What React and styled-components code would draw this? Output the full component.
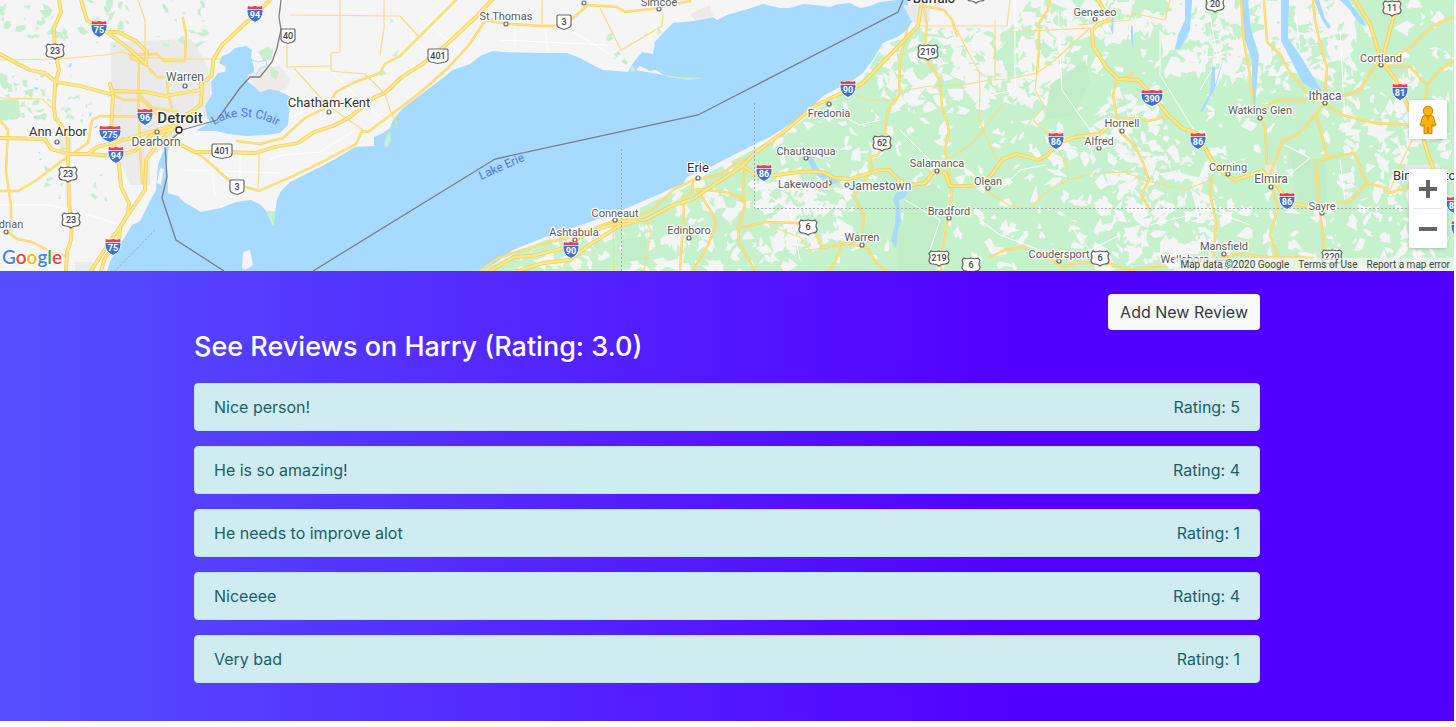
import React from "react";
import styled, { createGlobalStyle } from "styled-components";

const GlobalStyle = createGlobalStyle`
  *, *::before, *::after { box-sizing: border-box; }
  body { margin: 0; background: #fff; font-family: Inter, "Liberation Sans", sans-serif; font-size: 16px; line-height: 24px; }
`;

const Page = styled.div`
  padding: 0 2px 6px 0;
`;

const MapFrame = styled.section`
  position: relative;
  height: 271px;
  overflow: hidden;
  background: #f5f5f5;
  font-family: Roboto, sans-serif;
`;

const MapCanvas = styled.svg`
  display: block;
  width: 100%;
  height: 100%;
`;

const MapControls = styled.div`
  position: absolute;
  right: 7px;
  bottom: 23px;
  display: flex;
  flex-direction: column;
  gap: 30px;
`;

const ControlGroup = styled.div`
  width: 38px;
  border-radius: 2px;
  background: #fff;
  box-shadow: 0 1px 4px -1px rgba(0, 0, 0, 0.3);
`;

const ControlButton = styled.button`
  display: grid;
  place-items: center;
  width: 38px;
  height: 39px;
  padding: 0;
  border: 0;
  background: none;
  cursor: pointer;
`;

const ControlDivider = styled.hr`
  height: 1px;
  margin: 0 5px;
  border: 0;
  background: #e6e6e6;
`;

const Attribution = styled.footer`
  position: absolute;
  right: 0;
  bottom: 0;
  display: flex;
  gap: 9px;
  padding: 0 4px 0 6px;
  background: rgba(245, 245, 245, 0.7);
  color: #444;
  font-size: 10px;
  line-height: 13px;
`;

const AttributionLink = styled.a`
  color: inherit;
  text-decoration: none;
`;

const Reviews = styled.main`
  padding: 23px 16px 38px;
  background: linear-gradient(to right, #5550ff 0%, #5200ff 70%);
`;

const Container = styled.div`
  display: flex;
  flex-direction: column;
  max-width: 1066px;
  margin: 0 auto;
`;

const AddButton = styled.button`
  align-self: flex-end;
  height: 36px;
  padding: 0 12px;
  border: 0;
  border-radius: 4px;
  background: #f8f9fa;
  color: #343a40;
  font: inherit;
  cursor: pointer;
`;

const Title = styled.h1`
  margin: 0 0 19px;
  color: #fff;
  font-size: 27px;
  font-weight: 500;
  line-height: 34px;
`;

const ReviewList = styled.ul`
  display: flex;
  flex-direction: column;
  gap: 15px;
  margin: 0;
  padding: 0;
  list-style: none;
`;

const ReviewItem = styled.li`
  display: flex;
  justify-content: space-between;
  padding: 11px 19px;
  border: 1px solid #bee5eb;
  border-radius: 4px;
  background: #cfedf1;
  color: #1b6068;
`;

/* ---------- map data ---------- */

const WATER = [
  "107,271 110,262 117,248 125,237 132,225 140,221 150,201 156,190 158,165 163,152 170,140 175,133 173,141 168,150 167,165 168,193 178,196 184,202 201,212 221,208 236,202 251,200 261,205 267,212 273,226 275,212 277,200 281,191 290,182 320,167 337,158 355,147 374,146 374,137 383,133 390,128 393,120 403,108 423,93 440,80 453,70 470,64 480,56 493,51 503,52 540,53 567,53 580,58 591,64 603,70 628,72 633,63 642,52 653,54 655,42 663,33 673,23 694,21 713,17 717,20 727,15 748,9 763,4 780,8 790,8 803,4 815,5 830,7 838,4 850,3 860,8 870,6 880,2 897,0 907,0 913,20 907,30 897,37 883,43 874,58 863,73 850,82 840,87 823,96 817,102 805,113 793,122 770,137 753,145 720,162 705,170 692,175 687,177 683,184 670,189 660,194 627,208 590,222 543,238 513,250 495,263 480,271",
  "210,122 207,118 205,106 212,94 211,82 218,73 225,72 226,67 219,63 222,56 228,54 235,48 246,46 252,50 251,57 254,64 254,72 248,75 247,81 254,86 260,92 270,89 279,91 289,96 289,112 288,125 280,133 267,135 246,136 228,134 216,131 196,131",
  "1241,0 1248,0 1251,30 1259,55 1255,106 1252,106 1252,60 1242,32",
  "1281,0 1289,0 1288,38 1300,55 1312,75 1322,91 1322,95 1302,82 1292,62 1281,41",
  "1314,0 1319,0 1325,18 1331,27 1328,29 1322,20",
  "1340,0 1348,0 1363,20 1366,27 1358,22 1350,10",
  "1192,0 1190,30 1180,49 1175,49 1178,35 1185,20 1185,0",
  "1225,53 1216,86 1203,111 1200,112 1210,93 1212,67 1215,67 1215,85",
  "1112,16 1114,16 1113,35 1111,30",
  "1131,25 1133,27 1133,47 1131,40",
  "804,153 811,155 818,168 824,173 833,178 840,182 832,184 824,181 814,173",
  "896,193 909,190 905,197 899,200 901,222 898,230 896,248 894,245 891,240 895,226 896,208 893,200",
];

const ISLANDS = [
  "243,252 250,250 253,265 245,270 242,268",
  "636,70 640,66 650,71 656,70 664,75 652,73",
  "160,168 164,169 161,185 157,183",
];

const COAST_GREEN = [
  "267,211 275,211 274,227",
  "390,131 391,140 388,147 384,146 386,137",
  "660,74 678,77 703,78 690,80 668,77",
  "632,65 636,71 630,72",
];

const US_LAND =
  "480,271 513,255 543,241 590,228 627,215 660,198 683,189 710,172 753,150 793,128 817,109 840,93 863,79 874,60 883,45 907,37 918,20 925,28 1010,28 1030,0 1454,0 1454,271";

const MAJOR = [
  "59,0 61,12 54,28 55,52 59,70 55,84 54,105 55,117 68,135 68,155 69,205 72,222 71,240 67,252 66,271",
  "0,54 18,64 30,70 45,73 56,82 80,86 110,94 115,91 145,92 165,96 201,90 201,81",
  "81,0 87,20 98,29 108,33 128,48 146,64 147,52 136,41 118,32 107,32",
  "270,0 250,19 222,45 213,60 212,76 202,83 201,104 193,111 180,118",
  "110,84 113,95 111,132 115,150 119,165 121,187 129,203 128,213 120,228 119,240 105,258 101,271",
  "174,127 156,146 146,160 145,190 128,215 107,246 91,271",
  "0,138 45,139 51,149 68,154 88,154 115,156 135,151 150,136 172,129",
  "88,154 97,147 120,141 150,132 176,125",
  "181,145 195,152 220,152 255,153 275,147 298,143 314,132 333,126 350,117 375,97 385,93 402,77 421,65 447,44 475,18 492,0",
  "490,271 514,257 532,256 561,249 577,239 598,229 625,221 645,220 671,206 693,199 718,182 741,167 755,153 785,131 813,107 833,97 862,84 888,57 918,26 922,0",
  "518,271 543,263 570,260 588,246 619,226 638,221",
  "742,165 760,177 776,175 800,172 822,172 835,178 850,179 880,170 889,170 900,181 911,185 925,183 934,171 945,173 950,186 970,186 985,183 992,174 1003,159 1017,154 1038,160 1048,155 1056,144 1075,137 1100,134 1108,126",
  "1098,0 1110,20 1100,23 1092,30 1093,46 1107,68 1118,79 1138,80 1152,95 1168,115 1182,128 1197,133 1212,161 1222,172 1235,180 1263,171 1278,187 1288,202 1310,207",
  "1355,0 1370,24 1381,60 1396,80 1402,94 1410,111 1420,126 1428,155 1434,170",
  "1397,0 1393,19 1383,57",
];

const MEDIUM = [
  "0,120 8,130 6,171 11,205 11,230",
  "0,191 18,191 35,181 66,158 88,143 92,120 100,116 150,117",
  "0,226 17,239 32,242 55,254 66,256",
  "130,55 157,54 164,61 185,61 186,34 183,18",
  "130,58 146,65 157,77 164,77",
  "110,94 125,100 142,100 157,115",
  "138,94 153,108 178,112",
  "167,76 168,92 172,108",
  "139,64 138,100 142,183",
  "181,145 203,157 232,183 259,191 277,183 291,177 320,163 356,144 362,131 368,132 396,111 422,91 448,68 469,45 485,21 500,18",
  "237,141 260,144 283,138 305,118 327,107 336,92 353,83 380,73 385,64 400,56 430,26 456,0",
  "484,20 510,24 542,26 562,26 573,18 588,5 617,7 625,12 650,9 690,1",
  "480,271 498,258 542,244 579,235 620,218",
  "620,222 652,210 673,190 693,180 720,175 742,159",
  "693,180 692,192 683,198",
  "697,189 725,192 740,197 744,203",
  "683,198 684,209 680,271",
  "697,189 715,218 716,225 708,245 693,271",
  "745,160 743,190 745,205 738,228 739,242 755,271",
  "740,228 765,222 797,223 813,227 822,248 848,243 867,248 877,264 887,271",
  "843,243 836,260 829,271",
  "907,30 900,60 899,95 888,110 884,141 878,155 870,157 872,171 854,196 864,216 861,247",
  "922,0 927,24 924,56 940,80 942,107 949,130 945,150 948,167 952,196 947,225 941,260 941,271",
  "923,6 944,10 952,20 957,36",
  "1050,0 1048,10 1039,23 1039,50 1037,73",
  "990,257 1005,250 1025,247 1032,256 1050,259 1063,267 1081,262 1100,264 1112,264 1128,270 1165,266",
  "1117,79 1113,95 1117,118 1142,119 1149,121 1168,116",
  "1117,118 1120,132 1135,146 1143,163 1149,180 1141,195 1149,208",
  "1118,79 1128,77 1133,73",
  "1212,178 1210,193 1216,222 1214,255",
  "1197,266 1236,254 1268,257 1313,258",
  "1241,0 1244,42 1250,75 1253,106 1265,126 1267,164",
  "1264,0 1267,42 1281,55 1287,68 1309,95 1325,103",
  "1313,0 1315,20 1322,52 1327,67 1324,103 1342,115 1375,123 1410,125",
  "1262,108 1278,100 1325,100 1358,92 1375,66 1384,61",
  "1325,103 1300,133 1282,142 1270,175",
  "1316,115 1322,136 1327,158 1355,153 1366,183 1383,187 1389,193 1409,187",
  "1326,159 1316,161 1318,190 1321,220 1325,255",
  "1337,202 1350,202 1366,183",
  "1271,185 1278,207 1270,235 1278,256",
  "1380,62 1410,48 1425,32 1440,22 1454,17",
  "1382,66 1410,67 1427,85 1425,105 1427,125",
  "1427,85 1440,70 1454,60",
];

const MINOR = [
  "0,60 58,59 105,55 122,52 135,57 175,59 222,59",
  "0,98 42,99 53,109",
  "138,0 145,20 145,60",
  "290,15 400,16 419,37",
  "340,0 340,52 331,53 331,71 365,74 385,94",
  "287,40 287,67 331,66",
  "294,68 320,97 330,107 363,130",
  "384,0 384,28 380,55",
  "385,94 390,110 397,125",
  "542,0 542,25",
  "600,8 621,50 642,38 662,26 663,15",
  "259,153 259,167 258,191",
  "918,26 1007,26 1010,0",
  "957,30 967,50 979,72 980,90 979,120 988,140 997,160",
  "902,91 930,86 961,85 990,80 1010,79 1037,73",
  "995,20 995,80",
  "1037,73 1035,90 1044,106 1033,120 1049,135 1067,165 1068,180 1090,174 1125,172 1145,180 1185,190 1210,180",
  "950,158 970,145 983,130 1002,105",
  "1068,180 1045,193 1030,208 1010,206 985,190",
  "1078,25 1110,22 1130,20 1132,13 1165,20 1170,0",
  "1010,32 1090,28",
  "1090,28 1055,60 1037,73",
  "775,228 800,237 810,250 822,248",
  "855,95 870,100 898,100",
  "646,220 651,232 644,271",
  "613,222 614,271",
  "1389,193 1400,165 1412,140",
];

const BACKROADS = [
  "0,205 50,205 90,215 120,225",
  "270,160 282,155 320,152 355,130",
  "285,120 330,100 373,140",
  "330,70 360,100 395,130",
  "405,30 450,75",
  "420,15 470,62",
  "500,40 610,45",
  "515,10 515,45",
  "545,30 548,50",
  "570,30 620,60",
  "185,170 280,173",
  "210,150 215,195",
  "240,155 240,198",
  "760,190 790,210 800,260",
  "830,110 860,125 880,120",
  "900,130 930,160",
  "905,200 940,220 930,250",
  "1015,0 1015,90 990,95",
  "1058,10 1062,90 1090,130",
  "1000,190 1020,170 1045,165",
  "1160,30 1160,75 1200,140",
  "1295,10 1300,48",
  "1340,30 1345,120",
  "1210,15 1218,60 1200,90",
  "980,220 1000,235 1040,250",
  "1070,225 1090,250 1120,235",
  "1150,225 1210,210 1250,225",
  "1285,145 1310,158 1270,190",
  "1340,160 1345,200",
];

const LABELS = [
  ["Warren", 185, 81, 12],
  ["Ann Arbor", 58, 136, 13],
  ["Dearborn", 156, 146, 12],
  ["Chatham-Kent", 329, 107, 13],
  ["drian", 11, 228, 11],
  ["St Thomas", 506, 20, 11],
  ["Simcoe", 659, 6, 11],
  ["Erie", 698, 172, 13],
  ["Conneaut", 615, 217, 11],
  ["Ashtabula", 574, 236, 11],
  ["Edinboro", 689, 234, 11],
  ["Fredonia", 829, 117, 11],
  ["Chautauqua", 806, 155, 11],
  ["Lakewood", 803, 188, 11],
  ["Jamestown", 880, 190, 12],
  ["Salamanca", 937, 167, 11],
  ["Olean", 988, 185, 11],
  ["Bradford", 949, 215, 11],
  ["Warren", 862, 241, 11],
  ["Geneseo", 1095, 16, 11],
  ["Hornell", 1122, 127, 11],
  ["Alfred", 1099, 145, 11],
  ["Coudersport", 1059, 258, 11],
  ["Cortland", 1381, 62, 11],
  ["Ithaca", 1325, 100, 12],
  ["Watkins Glen", 1260, 114, 11],
  ["Corning", 1228, 171, 11],
  ["Elmira", 1271, 183, 12],
  ["Sayre", 1322, 210, 11],
  ["Mansfield", 1224, 250, 11],
  ["Wellsboro", 1185, 263, 11],
  ["Binghamton", 1428, 180, 13],
];

const STRONG_LABELS = new Set(["Ann Arbor", "Chatham-Kent", "Erie", "Binghamton"]);

const TOWNS = [
  [185, 86], [57, 142], [157, 132], [329, 112], [6, 232], [506, 24], [659, 9],
  [698, 178], [615, 220], [575, 240], [689, 238], [829, 104], [806, 158],
  [829, 183], [847, 185], [937, 171], [988, 188], [949, 218], [862, 245],
  [1095, 19], [1122, 131], [1099, 148], [1059, 261], [1381, 65], [1325, 103],
  [1260, 118], [1228, 174], [1271, 187], [1322, 213], [1224, 254], [584, 3],
];

const INTERSTATES = [
  ["75", 99, 29], ["94", 255, 14], ["96", 145, 117], ["275", 110, 134],
  ["94", 116, 155], ["75", 113, 247], ["90", 571, 250], ["86", 764, 173],
  ["90", 848, 89], ["86", 1056, 141], ["390", 1152, 98], ["86", 1198, 141],
  ["81", 1400, 92], ["86", 1287, 201], ["86", 1454, 205], ["81", 1459, 229],
];

const US_ROUTES = [
  ["23", 55, 51], ["23", 68, 174], ["23", 71, 220], ["219", 928, 52],
  ["62", 882, 143], ["6", 808, 227], ["219", 939, 258], ["6", 971, 265],
  ["6", 1100, 258], ["20", 1215, 4], ["11", 1392, 8], ["220", 1332, 257],
  ["15", 1224, 267], ["20", 976, -5],
];

const PROVINCIAL = [
  ["40", 288, 36], ["401", 222, 151], ["3", 237, 187], ["401", 438, 56], ["3", 564, 22],
];

/* Deterministic scatter of field and forest shapes, so every render draws the same terrain. */
function createRandom(seed) {
  let state = seed;
  return () => {
    state = (state * 1664525 + 1013904223) % 4294967296;
    return state / 4294967296;
  };
}

function scatter(seed, count, [x0, y0, x1, y1], min, max) {
  const rand = createRandom(seed);
  let d = "";
  for (let i = 0; i < count; i += 1) {
    const cx = x0 + rand() * (x1 - x0);
    const cy = y0 + rand() * (y1 - y0);
    const size = min + rand() * (max - min);
    const corners = 3 + Math.floor(rand() * 6);
    const axis = rand() * Math.PI;
    const flatness = 0.35 + rand() * 0.5;
    for (let k = 0; k < corners; k += 1) {
      const angle = ((k + rand() * 0.5) / corners) * Math.PI * 2;
      const radius = size * (0.25 + rand() * 1.3);
      const u = Math.cos(angle) * radius;
      const v = Math.sin(angle) * radius * flatness;
      const x = (cx + u * Math.cos(axis) - v * Math.sin(axis)).toFixed(1);
      const y = (cy + u * Math.sin(axis) + v * Math.cos(axis)).toFixed(1);
      d += `${k ? "L" : "M"}${x} ${y}`;
    }
    d += "Z";
  }
  return d;
}

const CLEARINGS = [
  scatter(11, 850, [480, 0, 1454, 271], 2, 9),
  scatter(23, 150, [480, 180, 800, 271], 3, 10),
  scatter(29, 90, [760, 180, 850, 250], 3, 10),
  scatter(31, 170, [950, 0, 1080, 100], 4, 11),
  scatter(41, 150, [1170, 0, 1350, 75], 5, 15),
  scatter(43, 120, [1100, 150, 1230, 260], 3, 11),
  scatter(47, 90, [1080, 0, 1200, 40], 4, 12),
  scatter(53, 90, [1340, 70, 1454, 271], 3, 9),
  scatter(59, 50, [880, 20, 960, 100], 3, 11),
  scatter(97, 60, [1100, 90, 1160, 160], 3, 9),
];

const WOODS_NORTH = scatter(79, 70, [1180, 0, 1350, 85], 2, 7);

const FOREST = [
  scatter(61, 40, [0, 0, 130, 45], 2, 7),
  scatter(67, 34, [0, 75, 45, 120], 2, 8),
  scatter(71, 30, [45, 95, 110, 220], 1, 5),
  scatter(73, 14, [150, 0, 210, 50], 1, 5),
  scatter(83, 10, [600, 20, 660, 65], 1, 5),
];

const LAKELETS = scatter(89, 18, [30, 45, 130, 160], 1, 3);

function RoadSet({ routes, casing, color, outer, inner }) {
  return (
    <g fill="none" strokeLinejoin="round" strokeLinecap="round">
      {casing && routes.map((points) => (
        <polyline key={`c${points}`} points={points} stroke={casing} strokeWidth={outer} />
      ))}
      {routes.map((points) => (
        <polyline key={points} points={points} stroke={color} strokeWidth={inner} />
      ))}
    </g>
  );
}

function Interstate({ number, x, y }) {
  const w = number.length > 2 ? 11 : 8;
  return (
    <g transform={`translate(${x} ${y})`}>
      <path
        d={`M${-w + 1} -8 Q${-w / 2} -6.5 0 -8 Q${w / 2} -6.5 ${w - 1} -8 L${w} -3 Q${w} 5 0 8.5 Q${-w} 5 ${-w} -3Z`}
        fill="#3f73d1" stroke="#fff" strokeWidth="0.8"
      />
      <path
        d={`M${-w + 1} -8 Q${-w / 2} -6.5 0 -8 Q${w / 2} -6.5 ${w - 1} -8 L${w - 0.4} -4.5 H${-w + 0.4}Z`}
        fill="#e8414b"
      />
      <path d={`M${-w} -4.5H${w}`} stroke="#fff" strokeWidth="0.7" />
      <text y="4" textAnchor="middle" fontSize="9" fontWeight="700" fill="#fff">{number}</text>
    </g>
  );
}

function UsRoute({ number, x, y }) {
  const w = number.length > 2 ? 10 : 9;
  return (
    <g transform={`translate(${x} ${y})`}>
      <path
        d={`M${-w + 2} -7 Q${-w / 2} -5.5 0 -7 Q${w / 2} -5.5 ${w - 2} -7 L${w} -4.5 Q${w - 2} -1 ${w} 2 Q${w} 6 ${w - 4} 6 Q2 6 0 8 Q-2 6 ${-w + 4} 6 Q${-w} 6 ${-w} 2 Q${-w + 2} -1 ${-w} -4.5Z`}
        fill="#fff" stroke="#5f5f5f" strokeWidth="1.2"
      />
      <text y="3" textAnchor="middle" fontSize="9" fontWeight="500" fill="#444">{number}</text>
    </g>
  );
}

function Provincial({ number, x, y }) {
  const w = number.length > 2 ? 10 : 7;
  return (
    <g transform={`translate(${x} ${y})`}>
      <path
        d={`M${-w + 1} -7 H${w - 1} L${w} -6 V3 Q${w} 5 ${w - 3} 6 L0 7.5 L${-w + 3} 6 Q${-w} 5 ${-w} 3 V-6Z`}
        fill="#fff" stroke="#6a6a6a" strokeWidth="1.2" strokeLinejoin="round"
      />
      <text y="3" textAnchor="middle" fontSize="9" fontWeight="500" fill="#444">{number}</text>
    </g>
  );
}

const WATER_LABEL = { fill: "#5a78cf", fontSize: 12 };
const HALO = { stroke: "#fff", strokeWidth: 2.5, strokeLinejoin: "round", paintOrder: "stroke" };

function RegionMap() {
  return (
    <MapCanvas viewBox="0 0 1454 271" preserveAspectRatio="xMidYMid slice" role="img" aria-label="Map of Lake Erie">
      <defs>
        <clipPath id="us-land"><polygon points={US_LAND} /></clipPath>
        <path id="st-clair-curve" d="M214 125 Q245 106 285 130" />
      </defs>
      <rect width="1454" height="271" fill="#f5f5f5" />
      <polygon points="110,42 191,39 210,70 210,115 180,130 160,150 140,165 115,165 112,90" fill="#eaeaea" />
      <path d="M58 132h14v20h-12zM120 160h30v25h-20zM75 262h18v9h-18z" fill="#ebebeb" />
      <path d="M248 76L262 68L280 66L290 80L286 90L270 92L258 90Z" fill="#f0ebe7" />
      <path d="M690 14L710 5L713 16L695 20Z" fill="#eee9e6" />
      {FOREST.map((d) => <path key={d.slice(0, 20)} d={d} fill="#c8eed0" />)}
      <path d="M258 52L268 46L273 50L272 59L264 61Z M270 66L279 72L276 80L271 76Z M0 100L18 98L20 112L8 120L0 121Z" fill="#c5f0cb" />
      <path d="M378 73l4-4 5 5-7 2z M392 56l7-7-3 8z M390 18l4 3-3 2z" fill="#c5f0cb" />
      <path d={LAKELETS} fill="#a6daff" />
      <g clipPath="url(#us-land)">
        <rect x="470" width="984" height="271" fill="#c5f1cd" />
        {CLEARINGS.map((d) => <path key={d.slice(0, 20)} d={d} fill="#f5f5f5" />)}
        <path d="M905 186L935 185L948 195L945 225L935 271H900L895 240L903 222Z M1050 85L1085 60L1090 80L1075 115L1045 120Z M622 240L645 236L650 260L622 262Z M1290 150l35 12 2 45-30-8z" fill="#c1eec9" />
        <path d={WOODS_NORTH} fill="#c5f1cd" />
      </g>
      <RoadSet routes={BACKROADS} color="#fff" inner={1} />
      {WATER.map((points) => <polygon key={points} points={points} fill="#a6daff" />)}
      {ISLANDS.map((points) => <polygon key={points} points={points} fill="#f5f5f5" />)}
      {COAST_GREEN.map((points) => <polygon key={points} points={points} fill="#c5f0cb" />)}
      <path d="M252 60L258 62L266 60L267 66L260 68L256 75" fill="#f5f5f5" stroke="#a6daff" strokeWidth="1" />
      <path d="M903 5H930V22H912Z M1405 165H1440V185H1412Z M1265 165h12v18h-12z" fill="#e9e9e9" />

      <RoadSet routes={MINOR} color="#fbdc7e" inner={1.2} />
      <RoadSet routes={MEDIUM} casing="#f8d36c" color="#ffe07a" outer={2.4} inner={1.6} />
      <RoadSet routes={MAJOR} casing="#f3cd5b" color="#ffe783" outer={3.8} inner={2.4} />

      <g fill="none">
        <polyline
          points="281,0 279,17 281,30 277,48 272,62 260,77 250,77 240,88 217,120 203,124 182,130 172,139 165,147 167,177 162,198 176,240 224,271"
          stroke="#7c7f84" strokeWidth="1.3"
        />
        <polyline points="313,271 495,159 698,115 898,12 903,0" stroke="#7c7f84" strokeWidth="1.3" />
        <path d="M155 230L115 271 M621.5 149V271 M754.5 103V208.5H1454" stroke="#a3a6ad" strokeDasharray="2 2" />
      </g>

      {TOWNS.map(([x, y]) => (
        <circle key={`${x}-${y}`} cx={x} cy={y} r="2" fill="#fff" stroke="#666" strokeWidth="1.2" />
      ))}
      <circle cx="179" cy="130" r="3" fill="#fff" stroke="#222" strokeWidth="1.4" />
      <circle cx="909" cy="-1" r="2" fill="#333" />

      {INTERSTATES.map(([n, x, y]) => <Interstate key={`${x}-${y}`} number={n} x={x} y={y} />)}
      {US_ROUTES.map(([n, x, y]) => <UsRoute key={`${x}-${y}`} number={n} x={x} y={y} />)}
      {PROVINCIAL.map(([n, x, y]) => <Provincial key={`${x}-${y}`} number={n} x={x} y={y} />)}

      <g textAnchor="middle" {...HALO}>
        {LABELS.map(([name, x, y, size]) => (
          <text key={`${name}-${x}`} x={x} y={y} fontSize={size} fill={STRONG_LABELS.has(name) ? "#333" : "#5a5a5a"}>
            {name}
          </text>
        ))}
        <text x="180" y="123" fontSize="15" fontWeight="500" fill="#333">Detroit</text>
        <text x="934" y="3" fontSize="13" fontWeight="500" fill="#333">Buffalo</text>
      </g>
      <text {...WATER_LABEL}><textPath href="#st-clair-curve">Lake St Clair</textPath></text>
      <text {...WATER_LABEL} transform="translate(481 180) rotate(-24)">Lake Erie</text>

      <text x="2" y="264" fontFamily="Lato, sans-serif" fontSize="19" fontWeight="600" {...HALO}>
        <tspan fill="#4285f4">G</tspan>
        <tspan fill="#ea4335">o</tspan>
        <tspan fill="#fbbc05">o</tspan>
        <tspan fill="#4285f4">g</tspan>
        <tspan fill="#34a853">l</tspan>
        <tspan fill="#ea4335">e</tspan>
      </text>
    </MapCanvas>
  );
}

function PegmanIcon() {
  return (
    <svg width="18" height="30" viewBox="0 0 18 30" aria-hidden="true">
      <path d="M4 11Q9 9 14 11L17 20L14 21.5L13 19V28.5H9.7L9 22L8.3 28.5H5V19L4 21.5L1 20Z" fill="#fbb400" stroke="#b97a10" strokeWidth="0.9" strokeLinejoin="round" />
      <path d="M6.5 10.5H11.5L9 15.5Z" fill="#ef7d1a" />
      <circle cx="9" cy="6" r="4.8" fill="#fbb400" stroke="#b97a10" strokeWidth="0.9" />
    </svg>
  );
}

function ZoomIcon({ plus }) {
  return (
    <svg width="18" height="18" viewBox="0 0 18 18" aria-hidden="true">
      <path d={plus ? "M7 0H11V7H18V11H11V18H7V11H0V7H7Z" : "M0 7H18V11H0Z"} fill="#666" />
    </svg>
  );
}

const REVIEWS = [
  { text: "Nice person!", rating: 5 },
  { text: "He is so amazing!", rating: 4 },
  { text: "He needs to improve alot", rating: 1 },
  { text: "Niceeee", rating: 4 },
  { text: "Very bad", rating: 1 },
];

export default function App() {
  return (
    <Page>
      <GlobalStyle />
      <MapFrame>
        <RegionMap />
        <MapControls>
          <ControlGroup>
            <ControlButton type="button" aria-label="Street View"><PegmanIcon /></ControlButton>
          </ControlGroup>
          <ControlGroup>
            <ControlButton type="button" aria-label="Zoom in"><ZoomIcon plus /></ControlButton>
            <ControlDivider />
            <ControlButton type="button" aria-label="Zoom out"><ZoomIcon /></ControlButton>
          </ControlGroup>
        </MapControls>
        <Attribution>
          <span>Map data ©2020 Google</span>
          <AttributionLink href="#terms">Terms of Use</AttributionLink>
          <AttributionLink href="#report">Report a map error</AttributionLink>
        </Attribution>
      </MapFrame>
      <Reviews>
        <Container>
          <AddButton type="button">Add New Review</AddButton>
          <Title>See Reviews on Harry (Rating: 3.0)</Title>
          <ReviewList>
            {REVIEWS.map((review) => (
              <ReviewItem key={review.text}>
                <span>{review.text}</span>
                <span>Rating: {review.rating}</span>
              </ReviewItem>
            ))}
          </ReviewList>
        </Container>
      </Reviews>
    </Page>
  );
}
